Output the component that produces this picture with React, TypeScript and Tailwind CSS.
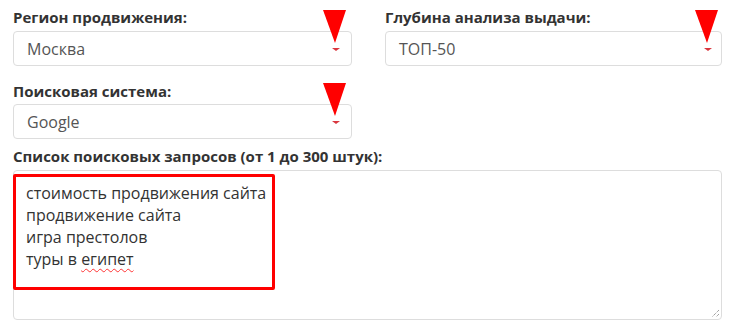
import React from "react";

function Arrow() {
  return (
    <svg
      className="absolute left-[309px] top-[-22px]"
      width="24"
      height="42"
      viewBox="0 0 24 42"
    >
      <polygon points="0,0 23,0 12,33" fill="#ff0000" />
      <polygon points="9,38 17,38 13,41" fill="#d9363e" />
    </svg>
  );
}

function Select({ value }: { value: string }) {
  return (
    <div className="relative h-[35px] w-full rounded-[4px] border border-[#dddddd] bg-white flex items-center pl-[13px] text-[16px] text-[#555555]">
      {value}
      <Arrow />
    </div>
  );
}

function Label({ children }: { children: React.ReactNode }) {
  return (
    <div className="h-[20px] text-[15px] leading-[20px] font-bold text-[#333333]">
      {children}
    </div>
  );
}

export default function App() {
  return (
    <div
      className="w-[754px] h-[326px] bg-white pl-[13px] pt-[7px] overflow-hidden"
      style={{ fontFamily: '"Open Sans", "Noto Sans", sans-serif' }}
    >
      <div className="w-[709px]">
        <div className="grid grid-cols-[339px_337px] gap-x-[33px]">
          <div>
            <Label>Регион продвижения:</Label>
            <div className="mt-[4px]">
              <Select value="Москва" />
            </div>
          </div>
          <div>
            <Label>Глубина анализа выдачи:</Label>
            <div className="mt-[4px]">
              <Select value="ТОП-50" />
            </div>
          </div>
          <div className="mt-[15px]">
            <Label>Поисковая система:</Label>
            <div className="mt-[3px]">
              <Select value="Google" />
            </div>
          </div>
        </div>
        <div className="mt-[7px]">
          <Label>Список поисковых запросов (от 1 до 300 штук):</Label>
          <div className="relative mt-[4px] h-[150px] w-full rounded-[4px] border border-[#dddddd] bg-white pl-[12px] pt-[11px] text-[16px] leading-[22px] text-[#333333]">
            <div>стоимость продвижения сайта</div>
            <div>продвижение сайта</div>
            <div>игра престолов</div>
            <div>
              туры в{" "}
              <span className="underline decoration-wavy decoration-[#ff3333] decoration-1 underline-offset-[3px]">
                египет
              </span>
            </div>
            <div className="absolute left-[-1px] top-[3px] w-[262px] h-[116px] border-[3px] border-[#ff0000] rounded-[2px]" />
            <svg
              className="absolute right-[1px] bottom-[1px]"
              width="9"
              height="9"
              viewBox="0 0 9 9"
            >
              <line x1="8" y1="1" x2="1" y2="8" stroke="#777" strokeWidth="1" strokeDasharray="1 1" />
              <line x1="8" y1="5" x2="5" y2="8" stroke="#777" strokeWidth="1" strokeDasharray="1 1" />
            </svg>
          </div>
        </div>
      </div>
    </div>
  );
}
